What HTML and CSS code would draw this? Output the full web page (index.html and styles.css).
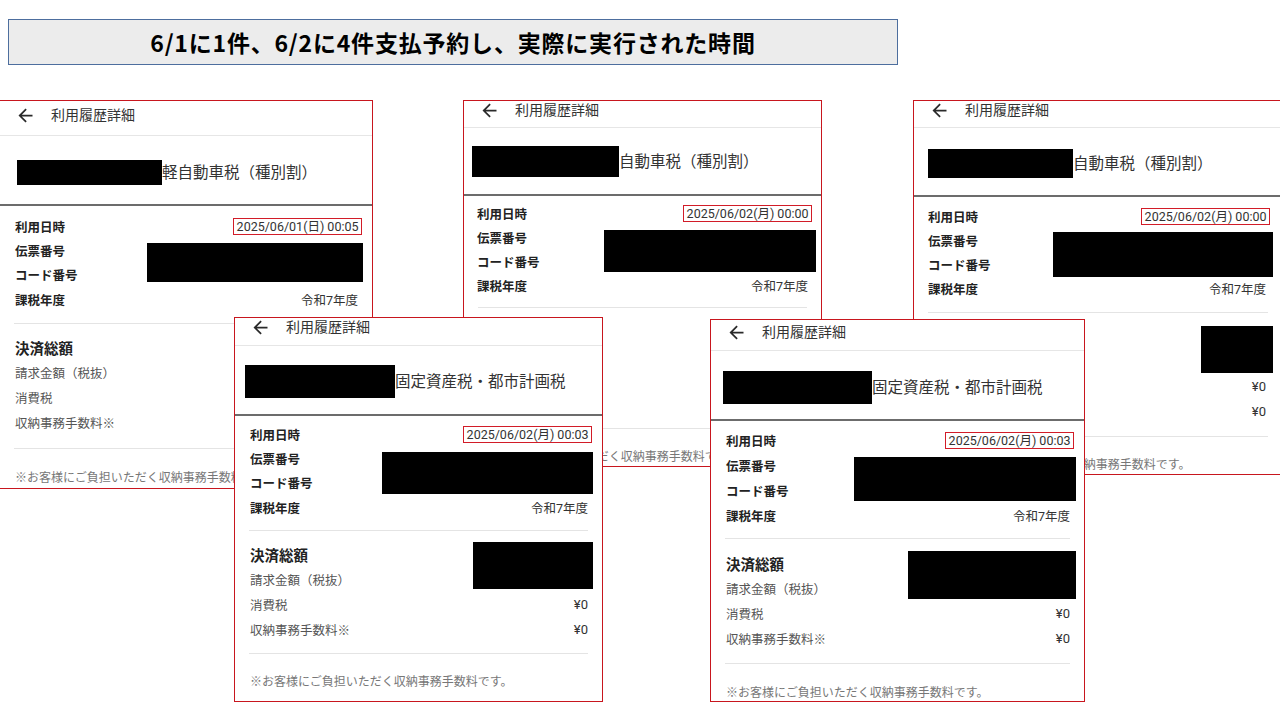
FILE: index.html
```html
<!DOCTYPE html>
<html lang="ja">
<head>
<meta charset="utf-8">
<title>支払予約の実行時間</title>
<link rel="stylesheet" href="styles.css">
</head>
<body>
<main class="slide">
  <h1 class="slide-title">6/1に1件、6/2に4件支払予約し、実際に実行された時間</h1>

  <section class="card card-a">
    <header class="card-head"><svg class="back" viewBox="0 0 24 24"><path d="M20 11H7.83l5.59-5.59L12 4l-8 8 8 8 1.41-1.41L7.83 13H20v-2z"/></svg><span>利用履歴詳細</span></header>
    <div class="card-title"><div class="title-row"><span class="redact redact-name"></span><span class="title-text">軽自動車税（種別割）</span></div></div>
    <div class="info">
      <span class="label">利用日時</span><span class="date">2025/06/01(日) 00:05</span>
      <span class="label">伝票番号</span><span class="redact redact-id"></span>
      <span class="label">コード番号</span>
      <span class="label">課税年度</span><span class="value">令和7年度</span>
    </div>
    <hr class="rule">
    <div class="pay">
      <span class="total">決済総額</span><span class="redact redact-amt"></span>
      <span class="plabel">請求金額（税抜）</span>
      <span class="plabel">消費税</span><span class="yen">¥0</span>
      <span class="plabel">収納事務手数料※</span><span class="yen">¥0</span>
    </div>
    <hr class="rule">
    <p class="note">※お客様にご負担いただく収納事務手数料です。</p>
  </section>

  <section class="card card-b">
    <header class="card-head"><svg class="back" viewBox="0 0 24 24"><path d="M20 11H7.83l5.59-5.59L12 4l-8 8 8 8 1.41-1.41L7.83 13H20v-2z"/></svg><span>利用履歴詳細</span></header>
    <div class="card-title"><div class="title-row"><span class="redact redact-name"></span><span class="title-text">自動車税（種別割）</span></div></div>
    <div class="info">
      <span class="label">利用日時</span><span class="date">2025/06/02(月) 00:00</span>
      <span class="label">伝票番号</span><span class="redact redact-id"></span>
      <span class="label">コード番号</span>
      <span class="label">課税年度</span><span class="value">令和7年度</span>
    </div>
    <hr class="rule">
    <div class="pay">
      <span class="total">決済総額</span><span class="redact redact-amt"></span>
      <span class="plabel">請求金額（税抜）</span>
      <span class="plabel">消費税</span><span class="yen">¥0</span>
      <span class="plabel">収納事務手数料※</span><span class="yen">¥0</span>
    </div>
    <hr class="rule">
    <p class="note">※お客様にご負担いただく収納事務手数料です。</p>
  </section>

  <section class="card card-c">
    <header class="card-head"><svg class="back" viewBox="0 0 24 24"><path d="M20 11H7.83l5.59-5.59L12 4l-8 8 8 8 1.41-1.41L7.83 13H20v-2z"/></svg><span>利用履歴詳細</span></header>
    <div class="card-title"><div class="title-row"><span class="redact redact-name"></span><span class="title-text">自動車税（種別割）</span></div></div>
    <div class="info">
      <span class="label">利用日時</span><span class="date">2025/06/02(月) 00:00</span>
      <span class="label">伝票番号</span><span class="redact redact-id"></span>
      <span class="label">コード番号</span>
      <span class="label">課税年度</span><span class="value">令和7年度</span>
    </div>
    <hr class="rule">
    <div class="pay">
      <span class="total">決済総額</span><span class="redact redact-amt"></span>
      <span class="plabel">請求金額（税抜）</span>
      <span class="plabel">消費税</span><span class="yen">¥0</span>
      <span class="plabel">収納事務手数料※</span><span class="yen">¥0</span>
    </div>
    <hr class="rule">
    <p class="note">※お客様にご負担いただく収納事務手数料です。</p>
  </section>

  <section class="card card-d">
    <header class="card-head"><svg class="back" viewBox="0 0 24 24"><path d="M20 11H7.83l5.59-5.59L12 4l-8 8 8 8 1.41-1.41L7.83 13H20v-2z"/></svg><span>利用履歴詳細</span></header>
    <div class="card-title"><div class="title-row"><span class="redact redact-name"></span><span class="title-text">固定資産税・都市計画税</span></div></div>
    <div class="info">
      <span class="label">利用日時</span><span class="date">2025/06/02(月) 00:03</span>
      <span class="label">伝票番号</span><span class="redact redact-id"></span>
      <span class="label">コード番号</span>
      <span class="label">課税年度</span><span class="value">令和7年度</span>
    </div>
    <hr class="rule">
    <div class="pay">
      <span class="total">決済総額</span><span class="redact redact-amt"></span>
      <span class="plabel">請求金額（税抜）</span>
      <span class="plabel">消費税</span><span class="yen">¥0</span>
      <span class="plabel">収納事務手数料※</span><span class="yen">¥0</span>
    </div>
    <hr class="rule">
    <p class="note">※お客様にご負担いただく収納事務手数料です。</p>
  </section>

  <section class="card card-e">
    <header class="card-head"><svg class="back" viewBox="0 0 24 24"><path d="M20 11H7.83l5.59-5.59L12 4l-8 8 8 8 1.41-1.41L7.83 13H20v-2z"/></svg><span>利用履歴詳細</span></header>
    <div class="card-title"><div class="title-row"><span class="redact redact-name"></span><span class="title-text">固定資産税・都市計画税</span></div></div>
    <div class="info">
      <span class="label">利用日時</span><span class="date">2025/06/02(月) 00:03</span>
      <span class="label">伝票番号</span><span class="redact redact-id"></span>
      <span class="label">コード番号</span>
      <span class="label">課税年度</span><span class="value">令和7年度</span>
    </div>
    <hr class="rule">
    <div class="pay">
      <span class="total">決済総額</span><span class="redact redact-amt"></span>
      <span class="plabel">請求金額（税抜）</span>
      <span class="plabel">消費税</span><span class="yen">¥0</span>
      <span class="plabel">収納事務手数料※</span><span class="yen">¥0</span>
    </div>
    <hr class="rule">
    <p class="note">※お客様にご負担いただく収納事務手数料です。</p>
  </section>
</main>
</body>
</html>
```

FILE: styles.css
```css
html, body {
  margin: 0;
  padding: 0;
  background: #ffffff;
}

.slide {
  position: relative;
  width: 1280px;
  height: 720px;
  overflow: hidden;
  background: #ffffff;
  padding-top: 19px;
  box-sizing: border-box;
}

.slide-title {
  margin: 0 0 0 8px;
  width: 890px;
  height: 46px;
  box-sizing: border-box;
  background: #ececec;
  border: 1px solid #4d6e9e;
  display: flex;
  align-items: center;
  justify-content: center;
  font-family: "Noto Sans CJK JP", "Liberation Sans", sans-serif;
  font-weight: 700;
  font-size: 23px;
  letter-spacing: 0.8px;
  color: #000000;
  line-height: 1;
}

/* ---------- screenshot cards ---------- */
.card {
  position: absolute;
  box-sizing: border-box;
  background: #ffffff;
  border: 1px solid #c8161e;
  overflow: hidden;
  display: flex;
  flex-direction: column;
  font-family: Roboto, "Noto Sans CJK JP", sans-serif;
  color: #222222;
  --pr: 14px;
  --pl: 15px;
}

.card-a { left: -1px; top: 100px; width: 374px; height: 389px;
  --head-h: 35px; --head-pt: 5px;
  --title-h: 70px; --rt: 24px; --rl: 17px; --rw: 145px; --rh: 25px;
  --info-pt: 8px; --row: 24.33px; --info-pb: 12px;
  --id-w: 216px; --id-h: 39px; --id-dy: 5px; --id-dx: -5px;
  --pay-pt: 10.5px; --prow: 25px; --pay-pb: 13.5px;
  --amt-w: 120px; --amt-h: 47px; --amt-dy: 0px;
  --note-pt: 20px; }

.card-b { left: 463px; top: 100px; width: 359px; height: 367px;
  --pl: 13px; --pr: 13px;
  --head-h: 27px; --head-pt: 0px;
  --title-h: 68px; --rt: 18px; --rl: 8px; --rw: 147px; --rh: 31px;
  --info-pt: 5px; --row: 24px; --info-pb: 10px;
  --id-w: 212px; --id-h: 42px; --id-dy: 5px; --id-dx: -8px;
  --pay-pt: 10px; --prow: 25px; --pay-pb: 10px;
  --amt-w: 90px; --amt-h: 44px; --amt-dy: 3px;
  --note-pt: 19px; }

.card-c { left: 913px; top: 100px; width: 370px; height: 375px;
  --pl: 14px; --pr: 16px;
  --head-h: 27px; --head-pt: 0px;
  --title-h: 69px; --rt: 21px; --rl: 14px; --rw: 145px; --rh: 29px;
  --info-pt: 7px; --row: 24px; --info-pb: 12px;
  --id-w: 220px; --id-h: 45px; --id-dy: 4px; --id-dx: -7px;
  --pay-pt: 10.5px; --prow: 25px; --pay-pb: 12.5px;
  --amt-w: 72px; --amt-h: 47px; --amt-dy: 2.5px;
  --note-pt: 19px; }

.card-d { left: 234px; top: 317px; width: 369px; height: 385px;
  --head-h: 28px; --head-pt: 0px;
  --title-h: 70px; --rt: 19px; --rl: 10px; --rw: 150px; --rh: 33px;
  --info-pt: 6px; --row: 24.33px; --info-pb: 10.7px;
  --id-w: 211px; --id-h: 42px; --id-dy: 6px; --id-dx: -5px;
  --pay-pt: 10.5px; --prow: 25px; --pay-pb: 11.5px;
  --amt-w: 120px; --amt-h: 47px; --amt-dy: 0.5px;
  --note-pt: 19px; }

.card-e { left: 710px; top: 319px; width: 375px; height: 383px;
  --head-h: 31px; --head-pt: 3px;
  --title-h: 70px; --rt: 20px; --rl: 12px; --rw: 149px; --rh: 33px;
  --info-pt: 6.5px; --row: 25px; --info-pb: 10.5px;
  --id-w: 222px; --id-h: 44px; --id-dy: 4.5px; --id-dx: -6px;
  --pay-pt: 11.5px; --prow: 25px; --pay-pb: 12.5px;
  --amt-w: 168px; --amt-h: 48px; --amt-dy: 0.5px;
  --note-pt: 20px; }

.card-head {
  flex: none;
  box-sizing: border-box;
  height: var(--head-h);
  padding: var(--head-pt) 0 0 15px;
  border-bottom: 1px solid #e6e6e6;
  display: flex;
  align-items: flex-start;
  gap: 15px;
  font-size: 14px;
  line-height: 18px;
  color: #333333;
}

.back {
  width: 21px;
  height: 21px;
  margin: -1.5px 0;
  fill: #2a2a2a;
  flex: none;
}

.card-title {
  flex: none;
  box-sizing: border-box;
  height: var(--title-h);
  padding: var(--rt) 0 0 var(--rl);
  border-bottom: 2px solid #6c6c6c;
}

.title-row {
  display: flex;
  align-items: center;
}

.redact {
  display: block;
  background: #000000;
}

.redact-name {
  width: var(--rw);
  height: var(--rh);
  flex: none;
}

.title-text {
  font-size: 15.5px;
  line-height: 20px;
  color: #333333;
  white-space: nowrap;
}

.info {
  flex: none;
  display: grid;
  grid-template-columns: 1fr auto;
  grid-auto-rows: var(--row);
  align-items: center;
  padding: var(--info-pt) var(--pr) var(--info-pb) var(--pl);
}

.label {
  grid-column: 1;
  font-size: 12.5px;
  font-weight: 700;
  color: #222222;
  white-space: nowrap;
}

.date {
  grid-column: 2;
  justify-self: end;
  font-size: 12.5px;
  line-height: 15px;
  color: #333333;
  border: 1.5px solid #d21c28;
  padding: 0 2.5px;
  margin-right: -4px;
  white-space: nowrap;
}

.value {
  grid-column: 2;
  justify-self: end;
  font-size: 12.5px;
  color: #333333;
}

.redact-id {
  grid-column: 2;
  grid-row: 2 / 4;
  align-self: start;
  justify-self: end;
  width: var(--id-w);
  height: var(--id-h);
  margin-top: var(--id-dy);
  margin-right: var(--id-dx);
}

.rule {
  flex: none;
  margin: 0 14px;
  border: 0;
  border-top: 1px solid #e4e4e4;
  height: 0;
}

.pay {
  flex: none;
  display: grid;
  grid-template-columns: 1fr auto;
  grid-auto-rows: var(--prow);
  align-items: center;
  padding: var(--pay-pt) var(--pr) var(--pay-pb) var(--pl);
}

.total {
  grid-column: 1;
  font-size: 14.5px;
  font-weight: 700;
  color: #222222;
}

.plabel {
  grid-column: 1;
  font-size: 12.5px;
  color: #555555;
  white-space: nowrap;
}

.yen {
  grid-column: 2;
  justify-self: end;
  font-size: 13px;
  color: #333333;
}

.redact-amt {
  grid-column: 2;
  grid-row: 1 / 3;
  align-self: start;
  justify-self: end;
  width: var(--amt-w);
  height: var(--amt-h);
  margin-top: var(--amt-dy);
  margin-right: var(--id-dx);
}

.note {
  flex: none;
  margin: 0;
  padding: var(--note-pt) var(--pr) 0 var(--pl);
  font-size: 12px;
  line-height: 18px;
  color: #777777;
  white-space: nowrap;
}
```
